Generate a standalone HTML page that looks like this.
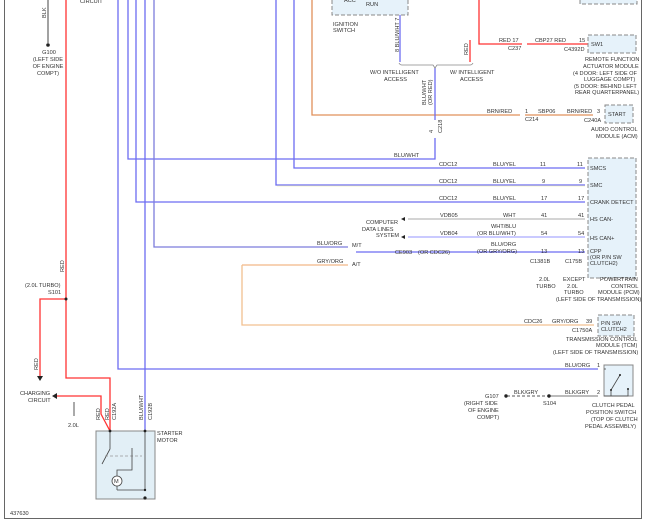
<!DOCTYPE html>
<html><head><meta charset="utf-8"><style>
html,body{margin:0;padding:0;background:#fff;}
svg{display:block}
text{font-family:"Liberation Sans",sans-serif;font-size:5.6px;fill:#333;}
</style></head><body>
<svg width="650" height="522" viewBox="0 0 650 522" xmlns="http://www.w3.org/2000/svg">
<rect width="650" height="522" fill="#fff"/>
<path d="M4.5 0V518.5H641.5V0" fill="none" stroke="#666" stroke-width="1"/>
<g fill="none" stroke-width="1.3">
<path d="M48 0V43" stroke="#444" stroke-width="1"/>
<path d="M66 0V378H110V431" stroke="#f33"/>
<path d="M66 299H40V376" stroke="#f33"/>
<path d="M110 431L101 414V396H57" stroke="#f33"/>
<path d="M74 402V416" stroke="#555" stroke-width="1"/>
<path d="M118 0V369H598" stroke="#6c6cf2"/>
<path d="M128 0V159H435V138" stroke="#6c6cf2"/>
<path d="M136 0V202H585" stroke="#6c6cf2"/>
<path d="M145 0V431" stroke="#6c6cf2"/>
<path d="M154 0V247H348" stroke="#7c7cdc"/>
<path d="M276 0V185H585" stroke="#6c6cf2"/>
<path d="M294 0V168H585" stroke="#6c6cf2"/>
<path d="M277 186H585" stroke="#ee9" stroke-width="0.6"/>
<path d="M312 0V115H520" stroke="#e0905a"/>
<path d="M525 115H593" stroke="#e0905a"/>
<path d="M242 265H348" stroke="#f2b888"/>
<path d="M242 265V325H594" stroke="#f2c090"/>
<path d="M356 252H585" stroke="#6c6cf2"/>
<path d="M408 219H585" stroke="#bbb"/>
<path d="M408 237H585" stroke="#aaf"/>
<path d="M400 15V62" stroke="#6c6cf2"/>
<path d="M470 40V62" stroke="#f33"/>
<path d="M479 0V44H522" stroke="#f33"/>
<path d="M527 44H593" stroke="#f33"/>
<path d="M435 68V120" stroke="#6c6cf2"/>
<path d="M399 63Q400 65 402 65H433L435 68L437 65H470Q472 65 473 63" stroke="#888" stroke-width="0.8"/>
<path d="M507 396H549" stroke="#555" stroke-width="1" stroke-dasharray="3,2"/>
<path d="M549 396H598" stroke="#777" stroke-width="1"/>
</g>
<circle cx="48" cy="45" r="1.8" fill="#222"/>
<circle cx="66" cy="299" r="1.5" fill="#222"/>
<circle cx="549" cy="396" r="1.7" fill="#222"/>
<circle cx="506" cy="396" r="1.7" fill="#222"/>
<path d="M37 376H43L40 381Z M57 393V399L52 396Z M405 217V221L401 219Z M405 235V239L401 237Z" fill="#222"/>
<g fill="#e6f2fa" stroke="#888" stroke-width="1" stroke-dasharray="4,2">
<rect x="332" y="-2" width="76" height="17"/>
<rect x="580" y="-2" width="57" height="6"/>
<rect x="588" y="35" width="48" height="18"/>
<rect x="605" y="105" width="28" height="18"/>
<rect x="588" y="158" width="48" height="120"/>
<rect x="598" y="315" width="36" height="21"/>
</g>
<rect x="604" y="365" width="29" height="31" fill="#e6f2fa" stroke="#888"/>
<rect x="96" y="431" width="59" height="68" fill="#e2eff6" stroke="#888"/>
<g stroke="#444" stroke-width="0.8" fill="none">
<path d="M110 431V449L102 464"/><path d="M145 431V490H117"/>
<path d="M105 456H142" stroke-dasharray="3,2" stroke="#999"/>
<path d="M132 448V470H117V480"/>
<circle cx="117" cy="481" r="5" fill="#fff"/>
<path d="M117 486V490"/>
<path d="M604 369H606 M604 396H611V390L620 375 M628 389V396H604"/>
</g>
<text x="114" y="483" font-size="5">M</text>
<g fill="#222"><circle cx="110" cy="431" r="1.4"/><circle cx="145" cy="431" r="1.4"/><circle cx="145" cy="490" r="1.2"/><circle cx="145" cy="498" r="1.6"/><circle cx="611" cy="390" r="1"/><circle cx="620" cy="375" r="1"/><circle cx="628" cy="389" r="1"/></g>
<text x="80" y="3">CIRCUIT</text>
<text x="49" y="54" text-anchor="middle">G100</text>
<text x="48" y="61" text-anchor="middle">(LEFT SIDE</text>
<text x="48" y="68" text-anchor="middle">OF ENGINE</text>
<text x="48" y="75" text-anchor="middle">COMPT)</text>
<text x="25" y="287">(2.0L TURBO)</text><text x="48" y="294">S101</text>
<text x="20" y="395">CHARGING</text><text x="28" y="402">CIRCUIT</text>
<text x="68" y="427">2.0L</text>
<text x="157" y="435">STARTER</text><text x="157" y="442">MOTOR</text>
<text x="10" y="515">437630</text>
<text x="333" y="26">IGNITION</text><text x="333" y="32">SWITCH</text>
<text x="344" y="2">ACC</text><text x="366" y="6">RUN</text>
<text x="370" y="74">W/O INTELLIGENT</text><text x="384" y="81">ACCESS</text>
<text x="450" y="74">W/ INTELLIGENT</text><text x="460" y="81">ACCESS</text>
<text x="499" y="42">RED  17</text><text x="508" y="50">C237</text>
<text x="535" y="42">CBP27  RED</text><text x="579" y="42">15</text>
<text x="564" y="51">C4392D</text><text x="591" y="46">SW1</text>
<text x="585" y="61">REMOTE FUNCTION</text><text x="583" y="68">ACTUATOR MODULE</text>
<text x="573" y="75">(4 DOOR: LEFT SIDE OF</text><text x="584" y="81">LUGGAGE COMPT)</text>
<text x="574" y="88">(5 DOOR: BEHIND LEFT</text><text x="575" y="94">REAR QUARTERPANEL)</text>
<text x="487" y="113">BRN/RED</text><text x="525" y="113">1</text><text x="538" y="113">SBP06</text><text x="567" y="113">BRN/RED</text><text x="597" y="113">3</text>
<text x="525" y="121">C214</text><text x="584" y="122">C240A</text><text x="608" y="116">START</text>
<text x="591" y="131">AUDIO CONTROL</text><text x="596" y="138">MODULE (ACM)</text>
<text x="394" y="157">BLU/WHT</text>
<text x="439" y="166">CDC12</text><text x="493" y="166">BLU/YEL</text><text x="540" y="166">11</text><text x="577" y="166">11</text><text x="590" y="170">SMCS</text>
<text x="439" y="183">CDC12</text><text x="493" y="183">BLU/YEL</text><text x="542" y="183">9</text><text x="579" y="183">9</text><text x="590" y="187">SMC</text>
<text x="439" y="200">CDC12</text><text x="493" y="200">BLU/YEL</text><text x="541" y="200">17</text><text x="578" y="200">17</text><text x="590" y="204">CRANK DETECT</text>
<text x="440" y="217">VDB05</text><text x="503" y="217">WHT</text><text x="541" y="217">41</text><text x="578" y="217">41</text><text x="590" y="221">HS CAN-</text>
<text x="491" y="228">WHT/BLU</text><text x="477" y="235">(OR BLU/WHT)</text>
<text x="440" y="235">VDB04</text><text x="541" y="235">54</text><text x="578" y="235">54</text><text x="590" y="240">HS CAN+</text>
<text x="366" y="224">COMPUTER</text><text x="362" y="231">DATA LINES</text><text x="376" y="237">SYSTEM</text>
<text x="317" y="245">BLU/ORG</text><text x="352" y="247">M/T</text>
<text x="317" y="263">GRY/ORG</text><text x="352" y="266">A/T</text>
<text x="395" y="254">CE903</text><text x="418" y="254">(OR CDC26)</text>
<text x="491" y="246">BLU/ORG</text><text x="477" y="253">(OR GRY/ORG)</text>
<text x="541" y="253">13</text><text x="578" y="253">13</text>
<text x="590" y="253">CPP</text><text x="590" y="259">(OR P/N SW</text><text x="590" y="265">CLUTCH2)</text>
<text x="530" y="263">C1381B</text><text x="565" y="263">C175B</text>
<text x="539" y="281">2.0L</text><text x="536" y="288">TURBO</text>
<text x="563" y="281">EXCEPT</text><text x="567" y="288">2.0L</text><text x="564" y="294">TURBO</text>
<text x="600" y="281">POWERTRAIN</text><text x="611" y="288">CONTROL</text><text x="598" y="294">MODULE (PCM)</text>
<text x="556" y="301">(LEFT SIDE OF TRANSMISSION)</text>
<text x="524" y="323">CDC26</text><text x="552" y="323">GRY/ORG</text><text x="586" y="323">39</text>
<text x="572" y="332">C1750A</text><text x="601" y="325">P/N SW</text><text x="601" y="331">CLUTCH2</text>
<text x="566" y="341">TRANSMISSION CONTROL</text><text x="596" y="347">MODULE (TCM)</text><text x="553" y="354">(LEFT SIDE OF TRANSMISSION)</text>
<text x="565" y="367">BLU/ORG</text><text x="597" y="367">1</text>
<text x="514" y="394">BLK/GRY</text><text x="565" y="394">BLK/GRY</text><text x="597" y="394">2</text>
<text x="543" y="405">S104</text><text x="485" y="398">G107</text>
<text x="464" y="405">(RIGHT SIDE</text><text x="468" y="412">OF ENGINE</text><text x="477" y="419">COMPT)</text>
<text x="592" y="407">CLUTCH PEDAL</text><text x="586" y="414">POSITION SWITCH</text><text x="591" y="421">(TOP OF CLUTCH</text><text x="585" y="428">PEDAL ASSEMBLY)</text>
<g transform="rotate(-90)">
<text x="-18" y="46">BLK</text>
<text x="-272" y="64">RED</text>
<text x="-370" y="38">RED</text>
<text x="-420" y="100">RED</text><text x="-420" y="109">RED</text><text x="-420" y="116">C192A</text>
<text x="-420" y="143">BLU/WHT</text><text x="-420" y="152">C192B</text>
<text x="-52" y="399">8 BLU/WHT  7</text>
<text x="-55" y="468">RED</text>
<text x="-105" y="426">BLU/WHT</text><text x="-105" y="432">(OR RED)</text>
<text x="-133" y="442">C218</text><text x="-133" y="433">4</text>
</g>
</svg>
</body></html>
